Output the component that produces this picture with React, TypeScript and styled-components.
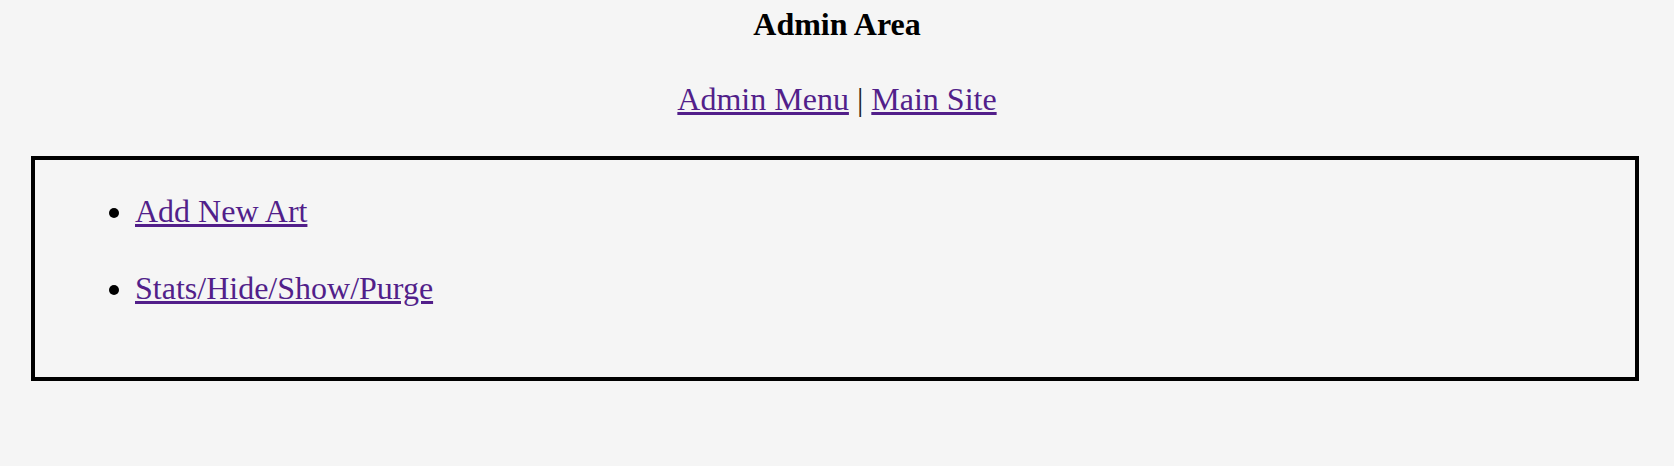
import { createGlobalStyle, styled } from "styled-components";

const GlobalStyle = createGlobalStyle`
  html, body {
    margin: 0;
    padding: 0;
    background: #f5f5f5;
  }
  body {
    font-family: "Liberation Serif", "Times New Roman", serif;
    font-size: 32px;
    color: #000;
  }
`;

const Page = styled.div`
  display: flex;
  flex-direction: column;
  align-items: center;
  padding-top: 6px;
`;

const Title = styled.h1`
  margin: 0;
  font-size: 32px;
  font-weight: bold;
  line-height: normal;
`;

const Nav = styled.div`
  margin-top: 38px;
  line-height: normal;
`;

const Link = styled.a`
  color: #521f8a;
  text-decoration: underline;
`;

const Sep = styled.span`
  color: #222;
`;

const Panel = styled.div`
  align-self: stretch;
  margin: 38px 35px 0 31px;
  border: 4px solid #000;
  padding: 33px 0 30px 0;
`;

const List = styled.ul`
  margin: 0;
  padding-left: 100px;
  list-style: disc;
`;

const Item = styled.li`
  line-height: normal;
  margin-bottom: 40px;
`;

export default function App() {
  return (
    <>
      <GlobalStyle />
      <Page>
        <Title>Admin Area</Title>
        <Nav>
          <Link href="#">Admin Menu</Link>
          <Sep> | </Sep>
          <Link href="#">Main Site</Link>
        </Nav>
        <Panel>
          <List>
            <Item>
              <Link href="#">Add New Art</Link>
            </Item>
            <Item>
              <Link href="#">Stats/Hide/Show/Purge</Link>
            </Item>
          </List>
        </Panel>
      </Page>
    </>
  );
}
